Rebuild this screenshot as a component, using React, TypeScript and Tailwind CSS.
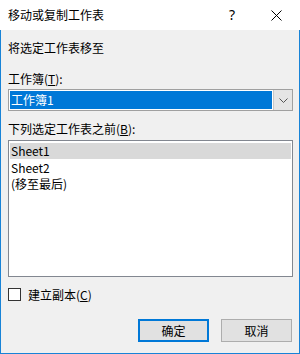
import React from "react";

const font = { fontFamily: '"Noto Sans CJK SC", "Noto Sans", sans-serif' };

export default function App() {
  return (
    <div
      className="w-[300px] h-[354px] flex flex-col text-[12px] leading-[16px] text-black select-none"
      style={font}
    >
      {/* Title bar */}
      <div className="h-[30px] bg-white flex items-center relative shrink-0">
        <span className="pl-[8px] text-[12px]">移动或复制工作表</span>
        <span className="absolute left-[229px] top-[7px] text-[14px] font-normal font-['Noto_Sans',sans-serif]">
          ?
        </span>
        <svg
          className="absolute left-[271px] top-[10px]"
          width="11"
          height="11"
          viewBox="0 0 11 11"
        >
          <path d="M0.5 0.5 L10.5 10.5 M10.5 0.5 L0.5 10.5" stroke="#000" strokeWidth="1" />
        </svg>
      </div>

      {/* Body */}
      <div className="flex-1 bg-[#f0f0f0] border-l border-r border-b border-[#1883d7] flex flex-col pl-[7px] pr-[6px]">
        <div className="mt-[10px] h-[16px]">将选定工作表移至</div>
        <div className="mt-[15px] h-[16px]">
          工作簿(<span className="underline">T</span>):
        </div>
        <div className="mt-[2px] h-[22px] flex border border-[#a0a0a0] bg-white">
          <div className="flex-1 m-[1px] bg-[#0078d7] text-white pl-[1px] flex items-center">
            工作簿1
          </div>
          <div className="w-[19px] bg-[#e5e5e5] border-l border-[#c8c8c8] flex items-center justify-center">
            <svg width="9" height="5" viewBox="0 0 9 5">
              <path d="M0.5 0.5 L4.5 4.5 L8.5 0.5" stroke="#555" strokeWidth="1" fill="none" />
            </svg>
          </div>
        </div>
        <div className="mt-[10px] h-[16px]">
          下列选定工作表之前(<span className="underline">B</span>):
        </div>
        <div className="mt-[3px] h-[137px] border border-[#828790] bg-white flex flex-col pt-[2px] px-[1px]">
          <div className="h-[16px] bg-[#d9d9d9] pl-[1px] flex items-center">Sheet1</div>
          <div className="h-[17px] pl-[1px] flex items-center">Sheet2</div>
          <div className="h-[16px] pl-[1px] flex items-center">(移至最后)</div>
        </div>
        <div className="mt-[11px] flex items-center h-[13px]">
          <div className="w-[13px] h-[13px] border border-[#333333] bg-white" />
          <span className="ml-[7px]">
            建立副本(<span className="underline">C</span>)
          </span>
        </div>
        <div className="mt-[18px] flex justify-end gap-[12px] pr-[1px]">
          <div className="w-[71px] h-[23px] border-2 border-[#0078d7] bg-[#e1e1e1] flex items-center justify-center">
            确定
          </div>
          <div className="w-[71px] h-[23px] border border-[#adadad] bg-[#e1e1e1] flex items-center justify-center">
            取消
          </div>
        </div>
      </div>
    </div>
  );
}
